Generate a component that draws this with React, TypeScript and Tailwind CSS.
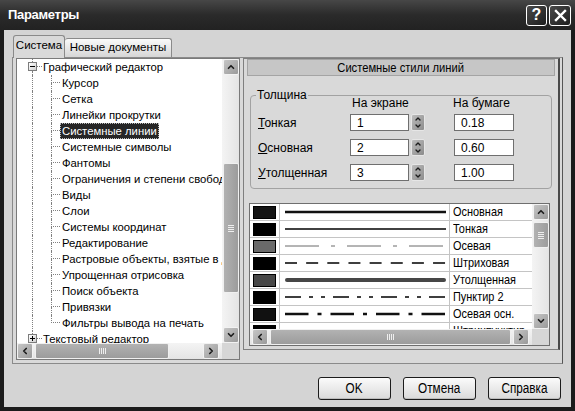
import { ChevronDown, ChevronLeft, ChevronRight, ChevronUp } from 'lucide-react';

type Dir = 'up' | 'down' | 'left' | 'right';

const icons = { up: ChevronUp, down: ChevronDown, left: ChevronLeft, right: ChevronRight };

function ArrowBtn({ dir, className = '' }: { dir: Dir; className?: string }) {
    const Icon = icons[dir];
    return (
        <div className={`shrink-0 flex items-center justify-center rounded-[2px] border border-[#f2f2f2] bg-linear-to-br from-[#c6c6c6] to-[#9a9a9a] ${className}`}>
            <Icon size={10} strokeWidth={4} className="text-[#1c1c1c]" />
        </div>
    );
}

function Grip({ vertical }: { vertical?: boolean }) {
    return (
        <div className={`flex ${vertical ? 'flex-col gap-[1px]' : 'flex-row gap-[1px]'}`}>
            {[0, 1, 2, 3].map((i) => (
                <div key={i} className={vertical ? 'w-[6px] h-[1px] bg-[#eeeeee]' : 'w-[1px] h-[6px] bg-[#eeeeee]'} />
            ))}
        </div>
    );
}

function Expander({ plus }: { plus?: boolean }) {
    return (
        <div className="relative w-[9px] h-[9px] shrink-0 border border-[#7c7c7c] bg-linear-to-br from-white to-[#d0d0d0] flex items-center justify-center">
            <div className="w-[5px] h-[1px] bg-black" />
            {plus && <div className="absolute w-[1px] h-[5px] bg-black" />}
        </div>
    );
}

const children = [
    'Курсор',
    'Сетка',
    'Линейки прокрутки',
    'Системные линии',
    'Системные символы',
    'Фантомы',
    'Ограничения и степени свободы',
    'Виды',
    'Слои',
    'Системы координат',
    'Редактирование',
    'Растровые объекты, взятые в документ',
    'Упрощенная отрисовка',
    'Поиск объекта',
    'Привязки',
    'Фильтры вывода на печать',
];

function RootRow({ label, plus }: { label: string; plus?: boolean }) {
    return (
        <div className="h-[16px] flex shrink-0">
            <div className="w-[11px] shrink-0" />
            <div className="w-[9px] shrink-0 flex flex-col items-center">
                <div className="h-[3px] w-0 border-l border-dotted border-[#808080]" />
                <Expander plus={plus} />
                <div className="flex-1 w-0 border-l border-dotted border-[#808080]" />
            </div>
            <div className="w-[5px] shrink-0 h-[8px] border-b border-dotted border-[#808080]" />
            <span className="leading-[16px] whitespace-nowrap pl-[1px]">{label}</span>
        </div>
    );
}

function ChildRow({ label, selected, last }: { label: string; selected?: boolean; last?: boolean }) {
    return (
        <div className="h-[16px] flex shrink-0">
            <div className="w-[15px] shrink-0" />
            <div className="w-[19px] shrink-0 border-l border-dotted border-[#808080]" />
            <div className="w-[9px] shrink-0 flex flex-col">
                <div className="h-[8px] border-l border-b border-dotted border-[#808080]" />
                {!last && <div className="flex-1 border-l border-dotted border-[#808080]" />}
            </div>
            <span className={`leading-[16px] whitespace-nowrap px-[2px] ${selected ? 'bg-[#262626] text-white outline outline-dotted outline-[#bbbbbb] -outline-offset-1' : ''}`}>
                {label}
            </span>
        </div>
    );
}

function TreePanel() {
    return (
        <div className="w-[224px] h-[302px] shrink-0 border border-[#7a7a7a] bg-white flex flex-col text-[11.3px]">
            <div className="flex h-[284px]">
                <div className="w-[205px] overflow-hidden flex flex-col">
                    <RootRow label="Графический редактор" />
                    {children.map((c, i) => (
                        <ChildRow key={c} label={c} selected={c === 'Системные линии'} last={i === children.length - 1} />
                    ))}
                    <RootRow label="Текстовый редактор" plus />
                </div>
                <div className="w-[17px] flex flex-col items-center bg-linear-to-r from-[#f4f4f4] to-[#e4e4e4]">
                    <ArrowBtn dir="up" className="w-[16px] h-[16px]" />
                    <div className="h-[88px]" />
                    <div className="w-[16px] h-[130px] rounded-[2px] border border-[#f0f0f0] bg-linear-to-r from-[#b2b2b2] to-[#9c9c9c] flex items-center justify-center">
                        <Grip vertical />
                    </div>
                    <div className="flex-1" />
                    <ArrowBtn dir="down" className="w-[16px] h-[16px]" />
                </div>
            </div>
            <div className="flex h-[16px]">
                <div className="w-[205px] flex items-center bg-linear-to-b from-[#f4f4f4] to-[#e4e4e4]">
                    <ArrowBtn dir="left" className="w-[16px] h-[16px]" />
                    <div className="ml-[2px] w-[134px] h-[16px] rounded-[2px] border border-[#f0f0f0] bg-linear-to-b from-[#b2b2b2] to-[#9c9c9c] flex items-center justify-center">
                        <Grip />
                    </div>
                    <div className="flex-1" />
                    <ArrowBtn dir="right" className="w-[16px] h-[16px] mr-[3px]" />
                </div>
                <div className="w-[17px] bg-[#d6d6d6]" />
            </div>
        </div>
    );
}

function Field({ value, className }: { value: string; className: string }) {
    return (
        <div className={`h-[17px] shrink-0 bg-white border border-[#6f6f6f] flex items-center pl-[6px] ${className}`}>{value}</div>
    );
}

function Spin() {
    return (
        <div className="w-[14px] h-[17px] shrink-0 rounded-[2px] border border-[#e6e6e6] bg-linear-to-br from-[#bcbcbc] to-[#8c8c8c] flex flex-col items-center justify-center">
            <ChevronUp size={8} strokeWidth={4} className="text-[#1c1c1c]" />
            <ChevronDown size={8} strokeWidth={4} className="text-[#1c1c1c] -mt-[1px]" />
        </div>
    );
}

function WidthRow({ first, rest, screen, paper }: { first: string; rest: string; screen: string; paper: string }) {
    return (
        <div className="flex items-center h-[17px]">
            <div className="w-[99px] pl-[7px] shrink-0">
                <u>{first}</u>
                {rest}
            </div>
            <Field value={screen} className="w-[59px]" />
            <div className="w-[2px]" />
            <Spin />
            <div className="w-[29px]" />
            <Field value={paper} className="w-[60px]" />
        </div>
    );
}

const lines = [
    { name: 'Основная', swatch: 'bg-[#141414]', color: '#111', w: 2.6, dash: '', cap: 'butt' as const },
    { name: 'Тонкая', swatch: 'bg-[#000000]', color: '#000', w: 1.3, dash: '', cap: 'butt' as const },
    { name: 'Осевая', swatch: 'bg-[#6a6a6a]', color: '#6a6a6a', w: 1, dash: '34 12 4 12', cap: 'butt' as const },
    { name: 'Штриховая', swatch: 'bg-[#000000]', color: '#000', w: 1.3, dash: '12 9.15', cap: 'butt' as const },
    { name: 'Утолщенная', swatch: 'bg-[#474747]', color: '#474747', w: 4, dash: '', cap: 'round' as const },
    { name: 'Пунктир 2', swatch: 'bg-[#000000]', color: '#000', w: 1.3, dash: '16 8 4 8 4 8', cap: 'butt' as const },
    { name: 'Осевая осн.', swatch: 'bg-[#111111]', color: '#111', w: 2.6, dash: '23.5 9 4 9', cap: 'butt' as const },
    { name: 'Штрихпунктир', swatch: 'bg-[#000000]', color: '#000', w: 1.3, dash: '', cap: 'butt' as const },
];

function LineList() {
    return (
        <div className="ml-[5px] mt-[14px] w-[301px] h-[143px] border border-[#6f6f6f] bg-white flex flex-col">
            <div className="flex h-[125px]">
                <div className="w-[282px] overflow-hidden flex flex-col">
                    {lines.map((l) => (
                        <div key={l.name} className="h-[17px] shrink-0 flex border-b border-[#c4c4c4]">
                            <div className="w-[30px] shrink-0 border-r border-[#c4c4c4] flex items-center pl-[3px]">
                                <div className={`w-[23px] h-[13px] border border-black ${l.swatch}`} />
                            </div>
                            <div className="w-[170px] shrink-0 border-r border-[#c4c4c4] flex items-center pl-[5px]">
                                <svg width="161" height="6" viewBox="0 0 161 6">
                                    <line x1={l.cap === 'round' ? 2 : 0} y1="3" x2={l.cap === 'round' ? 159 : 161} y2="3" stroke={l.color} strokeWidth={l.w} strokeDasharray={l.dash || undefined} strokeLinecap={l.cap} />
                                </svg>
                            </div>
                            <div className="flex-1 pl-[3px] leading-[16px] whitespace-nowrap overflow-hidden">
                                <span className="inline-block text-[13px] scale-x-[0.84] origin-left">{l.name}</span>
                            </div>
                        </div>
                    ))}
                </div>
                <div className="w-[17px] flex flex-col items-center bg-linear-to-r from-[#f4f4f4] to-[#e4e4e4]">
                    <ArrowBtn dir="up" className="w-[16px] h-[16px]" />
                    <div className="h-[2px]" />
                    <div className="w-[16px] h-[26px] rounded-[2px] border border-[#f0f0f0] bg-linear-to-r from-[#b2b2b2] to-[#9c9c9c] flex items-center justify-center">
                        <Grip vertical />
                    </div>
                    <div className="flex-1" />
                    <ArrowBtn dir="down" className="w-[16px] h-[16px]" />
                </div>
            </div>
            <div className="flex h-[16px]">
                <div className="w-[282px] flex items-center bg-linear-to-b from-[#f4f4f4] to-[#e4e4e4]">
                    <ArrowBtn dir="left" className="w-[16px] h-[16px] ml-[2px]" />
                    <div className="ml-[2px] w-[241px] h-[16px] rounded-[2px] border border-[#f0f0f0] bg-linear-to-b from-[#b2b2b2] to-[#9c9c9c] flex items-center justify-center">
                        <Grip />
                    </div>
                    <div className="flex-1" />
                    <ArrowBtn dir="right" className="w-[16px] h-[16px] mr-[3px]" />
                </div>
                <div className="w-[17px] bg-[#d6d6d6]" />
            </div>
        </div>
    );
}

function RightPanel() {
    return (
        <div className="w-[317px] h-[292px] shrink-0 border border-[#7f7f7f] border-r-2 border-r-[#4a4a4a] flex flex-col">
            <div className="ml-[3px] w-[308px] h-[17px] bg-[#c6c6c6] border border-[#a4a4a4] flex items-center justify-center">
                <span className="inline-block text-[13px] scale-x-[0.86]">Системные стили линий</span>
            </div>
            <div className="relative ml-[6px] mt-[19px] w-[302px] h-[94px] border border-[#a2a2a2] rounded-[4px] flex flex-col">
                <span className="absolute -top-[8px] left-[5px] px-[1px] leading-[14px] bg-[#d9d9d9]">Толщина</span>
                <div className="h-[14px] flex items-center">
                    <div className="w-[101px] shrink-0" />
                    <div className="w-[101px] shrink-0">На экране</div>
                    <div>На бумаге</div>
                </div>
                <div className="flex flex-col gap-[8px] mt-[4px]">
                    <WidthRow first="Т" rest="онкая" screen="1" paper="0.18" />
                    <WidthRow first="О" rest="сновная" screen="2" paper="0.60" />
                    <WidthRow first="У" rest="толщенная" screen="3" paper="1.00" />
                </div>
            </div>
            <LineList />
        </div>
    );
}

function DlgButton({ label }: { label: string }) {
    return (
        <button className="w-[73px] h-[23px] rounded-[3px] border border-[#1c1c1c] bg-linear-to-b from-[#fbfbfb] to-[#dadada] shadow-[inset_0_-1px_0_#bdbdbd] text-black">
            <span className="inline-block text-[14px] scale-x-[0.84]">{label}</span>
        </button>
    );
}

export default function App() {
    return (
        <div className="w-[575px] h-[411px] bg-[#1b1b1b] flex flex-col overflow-hidden font-['Liberation_Sans',Arial,sans-serif] text-[12px] text-black">
            <div className="h-[30px] shrink-0 flex items-center pl-[8px] pr-[4px] bg-linear-to-b from-[#474747] via-[#2a2a2a] to-[#222222]">
                <span className="text-white font-bold text-[13px] tracking-[-0.3px]">Параметры</span>
                <div className="ml-auto flex gap-[2px]">
                    <div className="w-[21px] h-[21px] rounded-[3px] border border-white bg-linear-to-br from-[#4a4a4a] to-[#1e1e1e] flex items-center justify-center text-white font-bold text-[16px] leading-none">
                        ?
                    </div>
                    <div className="w-[22px] h-[21px] rounded-[3px] border border-white bg-linear-to-br from-[#4a4a4a] to-[#1e1e1e] flex items-center justify-center">
                        <svg width="13" height="13" viewBox="0 0 13 13">
                            <path d="M2 2 L11 11 M11 2 L2 11" stroke="white" strokeWidth="2.4" strokeLinecap="square" />
                        </svg>
                    </div>
                </div>
            </div>
            <div className="flex-1 mx-[4px] mb-[4px] bg-[#d4d4d4] flex flex-col px-[8px] pt-[5px]">
                <div className="flex items-end h-[22px] pl-[1px] text-[11.5px]">
                    <div className="relative z-10 -mb-[1px] w-[52px] h-[23px] rounded-t-[3px] border border-b-0 border-[#8a8a8a] bg-[#d9d9d9] flex items-center justify-center pb-[2px]">
                        Система
                    </div>
                    <div className="w-[107px] h-[19px] rounded-t-[3px] border border-b-0 border-l-0 border-[#8a8a8a] bg-linear-to-b from-[#fafafa] to-[#d6d6d6] flex items-center justify-center">
                        Новые документы
                    </div>
                </div>
                <div className="h-[307px] border border-[#8a8a8a] border-r-[#555555] bg-[#d9d9d9] flex items-start gap-[3px] pl-[3px]">
                    <TreePanel />
                    <RightPanel />
                </div>
                <div className="flex justify-end gap-[12px] mt-[13px] pr-[2px]">
                    <DlgButton label="OK" />
                    <DlgButton label="Отмена" />
                    <DlgButton label="Справка" />
                </div>
            </div>
        </div>
    );
}
